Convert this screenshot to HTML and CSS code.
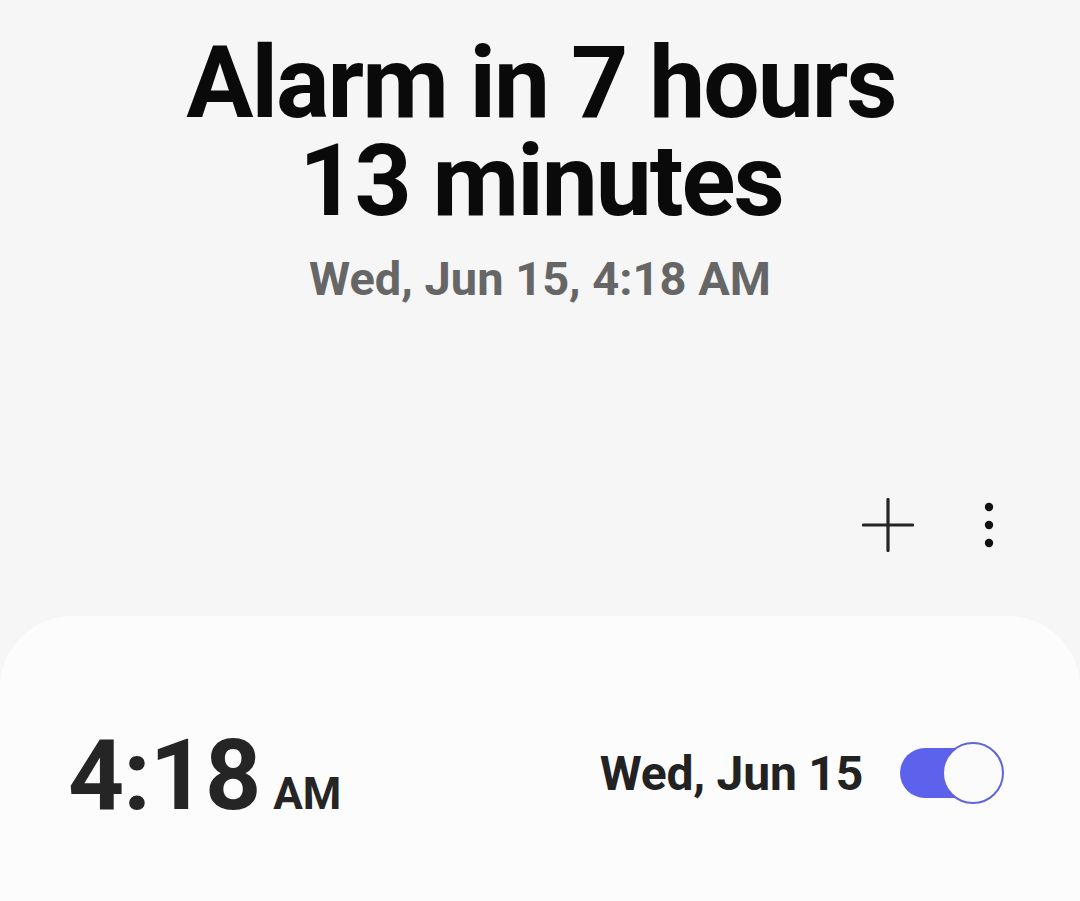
FILE: index.html
```html
<!DOCTYPE html>
<html>
<head>
<meta charset="utf-8">
<link rel="stylesheet" href="styles.css">
</head>
<body>
<div class="screen">
  <header class="header">
    <h1 class="title"><span class="title-line">Alarm in 7 hours</span><span class="title-line">13 minutes</span></h1>
    <div class="subtitle">Wed, Jun 15, 4:18 AM</div>
  </header>
  <div class="toolbar">
    <svg class="icon-plus" width="52" height="54" viewBox="0 0 52 54">
      <line x1="26" y1="1.5" x2="26" y2="52.5" stroke="#242424" stroke-width="3.2" stroke-linecap="round"/>
      <line x1="1.5" y1="27" x2="50.5" y2="27" stroke="#242424" stroke-width="3.2" stroke-linecap="round"/>
    </svg>
    <svg class="icon-more" width="10" height="48" viewBox="0 0 10 48">
      <circle cx="5" cy="6" r="4.2" fill="#111"/>
      <circle cx="5" cy="24" r="4.2" fill="#111"/>
      <circle cx="5" cy="42" r="4.2" fill="#111"/>
    </svg>
  </div>
  <section class="card">
    <div class="alarm-row">
      <div class="alarm-time">
        <span class="time">4:18</span>
        <span class="ampm">AM</span>
      </div>
      <div class="alarm-right">
        <span class="alarm-date">Wed, Jun 15</span>
        <div class="toggle">
          <div class="toggle-track"></div>
          <div class="toggle-knob"></div>
        </div>
      </div>
    </div>
  </section>
</div>
</body>
</html>
```

FILE: styles.css
```css
* { box-sizing: border-box; }
html, body {
  margin: 0;
  padding: 0;
  background: #f6f6f6;
}
body {
  font-family: Roboto, "Liberation Sans", sans-serif;
  width: 1080px;
  height: 901px;
  overflow: hidden;
}
.screen {
  display: flex;
  flex-direction: column;
  height: 901px;
}
.header {
  display: flex;
  flex-direction: column;
  align-items: center;
  padding-top: 34px;
}
.title {
  margin: 0;
  display: flex;
  flex-direction: column;
  align-items: center;
  font-size: 100px;
  line-height: 98px;
  font-weight: 700;
  color: #0a0a0a;
  text-align: center;
  letter-spacing: -2px;
}
.title-line {
  display: block;
  height: 98px;
  padding-left: 2px;
}
.subtitle {
  margin-top: 21px;
  font-size: 47px;
  line-height: 56px;
  font-weight: 700;
  color: #666666;
  letter-spacing: 0;
}
.toolbar {
  display: flex;
  justify-content: flex-end;
  align-items: center;
  gap: 70px;
  height: 80px;
  margin-top: 178px;
  padding-right: 86px;
}
.card {
  margin-top: 51px;
  flex: 1;
  background: #fcfcfc;
  border-radius: 72px 72px 0 0;
  padding: 100px 76px 0 68px;
}
.alarm-row {
  display: flex;
  justify-content: space-between;
  align-items: center;
  height: 120px;
}
.alarm-time {
  display: flex;
  align-items: baseline;
  gap: 13px;
  color: #252525;
  font-weight: 700;
}
.time {
  font-size: 98px;
  line-height: 98px;
  letter-spacing: -1px;
}
.ampm {
  font-size: 44px;
  line-height: 46px;
}
.alarm-right {
  display: flex;
  align-items: center;
  gap: 37px;
}
.alarm-date {
  font-size: 48px;
  line-height: 56px;
  font-weight: 700;
  color: #222222;
  letter-spacing: -0.2px;
  margin-top: -4px;
}
.toggle {
  position: relative;
  width: 104px;
  height: 62px;
  margin-top: -7px;
}
.toggle-track {
  position: absolute;
  left: 0;
  top: 6px;
  width: 84px;
  height: 50px;
  border-radius: 25px;
  background: #5d62ec;
}
.toggle-knob {
  position: absolute;
  right: 0;
  top: 0;
  width: 62px;
  height: 62px;
  border-radius: 50%;
  background: #fbfbfb;
  border: 2.5px solid #6064db;
}
```
